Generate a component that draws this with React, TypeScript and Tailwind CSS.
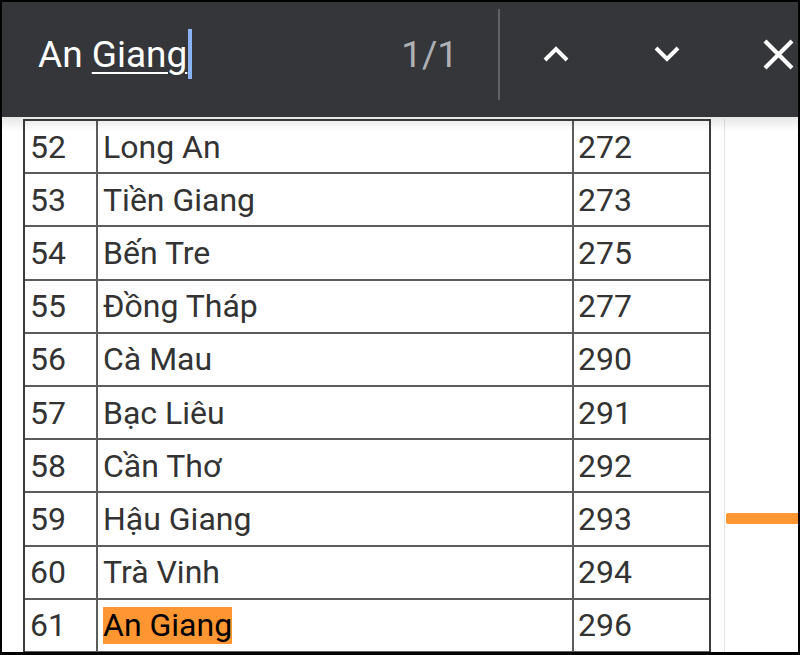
const rows: [string, string, string][] = [
  ['52', 'Long An', '272'],
  ['53', 'Tiền Giang', '273'],
  ['54', 'Bến Tre', '275'],
  ['55', 'Đồng Tháp', '277'],
  ['56', 'Cà Mau', '290'],
  ['57', 'Bạc Liêu', '291'],
  ['58', 'Cần Thơ', '292'],
  ['59', 'Hậu Giang', '293'],
  ['60', 'Trà Vinh', '294'],
  ['61', 'An Giang', '296'],
];

function ChevronUp() {
  return (
    <svg width="30" height="20" viewBox="0 0 30 20" fill="none">
      <path d="M4 16 L15 5 L26 16" stroke="#fff" strokeWidth="4" />
    </svg>
  );
}

function ChevronDown() {
  return (
    <svg width="30" height="20" viewBox="0 0 30 20" fill="none">
      <path d="M4 4 L15 15 L26 4" stroke="#fff" strokeWidth="4" />
    </svg>
  );
}

function CloseIcon() {
  return (
    <svg width="33" height="33" viewBox="0 0 33 33" fill="none">
      <path d="M3 3 L30 30 M30 3 L3 30" stroke="#fff" strokeWidth="4.2" />
    </svg>
  );
}

export default function App() {
  return (
    <div className="w-[800px] h-[655px] bg-black pt-[2px] pl-[2px] pr-[2px] pb-[3px] font-['Roboto',sans-serif]">
      <div className="relative w-full h-full bg-white flex flex-col overflow-hidden">
        {/* Find bar */}
        <div className="h-[115px] shrink-0 bg-[#35363a] flex items-center pb-[11px]">
          <div className="w-[496px] flex items-center pl-[36px] pr-[40px]">
            <div className="flex-1 flex items-center text-[37px] text-white leading-none">
              <span className="whitespace-pre">An </span>
              <span className="underline decoration-2 underline-offset-[5px]">Giang</span>
              <span className="w-[4px] h-[50px] bg-[#8ab4f8] ml-[1px]" />
            </div>
            <span className="text-[37px] text-[#aeb1b6] leading-none">1/1</span>
          </div>
          <div className="w-[2px] h-[91px] bg-[#5f6368]" />
          <div className="w-[112px] flex justify-center">
            <ChevronUp />
          </div>
          <div className="w-[110px] flex justify-center">
            <ChevronDown />
          </div>
          <div className="flex-1 flex justify-end pr-[3px]">
            <CloseIcon />
          </div>
        </div>

        {/* Page content */}
        <div className="flex-1 flex pt-[2px] min-h-0">
          <div className="ml-[21px] w-[688px] border-x-2 border-t-2 border-[#3c3c3c] text-[32px] text-[#333]">
            {rows.map(([no, name, code]) => (
              <div key={no} className="flex h-[53.2px] border-b-2 border-[#5c5c5c]">
                <div className="w-[73px] border-r-2 border-[#5c5c5c] pl-[5px] flex items-center">{no}</div>
                <div className="w-[476px] border-r-2 border-[#5c5c5c] pl-[5px] flex items-center">
                  {name === 'An Giang' ? (
                    <span className="bg-[#ff9632] text-black leading-[37px]">{name}</span>
                  ) : (
                    name
                  )}
                </div>
                <div className="flex-1 pl-[4px] flex items-center">{code}</div>
              </div>
            ))}
          </div>
          <div className="ml-[13px] w-[1px] bg-[#e4e4e4]" />
          <div className="flex-1 pt-[394px] pl-[1px]">
            <div className="h-[11px] bg-[#ff9632] rounded-l-[2px]" />
          </div>
        </div>

        {/* toolbar shadow */}
        <div className="absolute left-0 right-0 top-[115px] h-[14px] bg-linear-to-b from-black/10 to-transparent pointer-events-none" />
      </div>
    </div>
  );
}
